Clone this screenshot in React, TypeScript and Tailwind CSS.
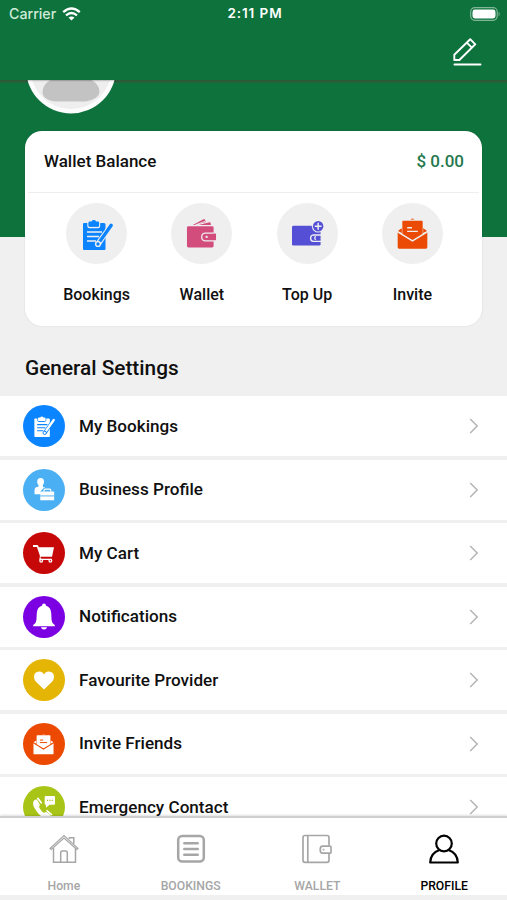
import type { ReactNode } from 'react';

type IconProps = { className?: string; bg?: string };

/* Glyphs use a 32x32 box; `bg` is the colour of the cut-out details. */
function ClipboardIcon({ className, bg }: IconProps) {
  return (
    <svg className={className} viewBox="0 0 32 32" fill="none">
      <path d="M3 5h20q1.500 0 1.500 1.500V31q0 1-1 1H3q-1 0-1-1V6q0-1 1-1z" fill="currentColor" />
      <path d="M7 4.500V8q0 1.500 1.500 1.500h8.500Q18.500 9.500 18.500 8V4.500" stroke={bg} strokeWidth="1.400" />
      <path d="M8.500 3.500h2a2.600 2.600 0 0 1 4.600 0h2q1 0 1 1v3q0 1-1 1H8.500q-1 0-1-1v-3q0-1 1-1z" fill="currentColor" />
      <path d="M6 14H21M6 18.500H18M6 23H15" stroke={bg} strokeWidth="1.500" />
      <path d="m28.300 5.500-13 18 4.400 3.700L32 8.500z" fill={bg} />
      <path d="m28.800 6.200-11.500 16.500 2.600 2L31.600 8.200q.8-1.400-.5-2.300t-2.300.3z" fill="currentColor" />
      <circle cx="17" cy="26" r="2.400" fill="currentColor" stroke={bg} strokeWidth="1.400" />
    </svg>
  );
}

function WalletIcon({ className, bg }: IconProps) {
  return (
    <svg className={className} viewBox="0 0 32 32" fill="none">
      <path d="M7 7.300 18 1.200q1-.4 1.600.5L20.500 4 9 7.300zM13 7.300l11-3q1-.2 1.300.7l.5 2.300z" fill="currentColor" />
      <path d="m10 7 10-3.600" stroke={bg} strokeWidth=".9" />
      <path d="M2.500 8.500H27q1.500 0 1.500 1.500v19q0 1.500-1.500 1.500H2.500Q1 30.500 1 29V10q0-1.500 1.500-1.500z" fill="currentColor" />
      <path d="M19.500 15.500H31v8H19.500q-3.300-.5-3.300-4t3.300-4z" fill="currentColor" stroke={bg} strokeWidth="1.300" />
      <path d="M28 16.200h3v6.600h-3z" fill="currentColor" />
      <circle cx="21.300" cy="19.500" r="1.200" fill={bg} />
    </svg>
  );
}

function TopUpIcon({ className, bg }: IconProps) {
  return (
    <svg className={className} viewBox="0 0 34 32" fill="none">
      <path d="M2.500 8H29q1.500 0 1.500 1.500V27q0 1.500-1.500 1.500H2.500Q1 28.500 1 27V9.500Q1 8 2.500 8z" fill="currentColor" />
      <path d="M31 17.500H23q-2.800.4-2.800 3.300t2.800 3.300h8" stroke={bg} strokeWidth="1.400" />
      <path d="M25.500 18.900q-2 1.800 0 3.700" stroke={bg} strokeWidth="1.300" />
      <circle cx="28" cy="8.500" r="6.500" fill={bg} />
      <circle cx="28" cy="8.500" r="5.400" fill="currentColor" />
      <path d="M28 5v7M24.500 8.500h7" stroke={bg} strokeWidth="1.500" />
    </svg>
  );
}

function InviteIcon({ className, bg }: IconProps) {
  return (
    <svg className={className} viewBox="0 0 32 32" fill="none">
      <path d="M14 1.500q2-1.800 4 0z" fill="currentColor" />
      <path d="M6.500 2.800h19q1 0 1 1V20L16 26 5.500 20V3.800q0-1 1-1z" fill="currentColor" />
      <path d="M10.500 10h5M10.500 13.800h11" stroke={bg} strokeWidth="1.500" />
      <path d="M1.500 13 5 10.500v5L1.200 13.700zM30.500 13 27 10.500v5l3.800-1.800z" fill="currentColor" />
      <path d="M.7 14.500 16 23.800l15.300-9.300v15.800q0 1.500-1.500 1.500H2.200q-1.500 0-1.500-1.500z" fill="currentColor" />
      <path d="M.8 14.300 16 23.700l15.200-9.400" stroke={bg} strokeWidth="1.600" />
    </svg>
  );
}

function BusinessIcon({ className, bg }: IconProps) {
  return (
    <svg className={className} viewBox="0 0 32 34" fill="none">
      <ellipse cx="11" cy="5.500" rx="5" ry="5.500" fill="currentColor" />
      <path d="M8 9h6l.7 4.500h3L11 20v4H2V18q0-4.300 4-4.800l2-.5z" fill="currentColor" />
      <path d="M10.500 20.500 15 15h14v5H10.500z" fill={bg} />
      <path d="M16 20v-2q0-1.500 1.500-1.500h7Q26 16.500 26 18v2" stroke="currentColor" strokeWidth="1.700" />
      <path d="M11.500 20H30q1 0 1 1v12H10.500V21q0-1 1-1z" fill="currentColor" />
      <path d="M10.500 26.500H31" stroke={bg} strokeWidth="1.400" />
    </svg>
  );
}

function CartIcon({ className, bg }: IconProps) {
  return (
    <svg className={className} viewBox="0 0 32 32" fill="none">
      <path d="M0 3h6.500q1.200 0 1.600 1.500L8.800 6.500H32l-3 14.500H11L6 6H0z" fill="currentColor" />
      <path d="M11.500 20 10.800 25h17.700" stroke="currentColor" strokeWidth="2" />
      <path d="M11 22h17.500" stroke={bg} strokeWidth="1" />
      <circle cx="12.500" cy="27" r="3" fill="currentColor" />
      <circle cx="26.500" cy="27" r="3" fill="currentColor" />
      <circle cx="12.500" cy="27" r="1" fill={bg} />
      <circle cx="26.500" cy="27" r="1" fill={bg} />
    </svg>
  );
}

function BellIcon({ className }: IconProps) {
  return (
    <svg className={className} viewBox="0 0 32 38" fill="currentColor">
      <path d="M16 0q2.600 0 3 3.300 7 2 7.500 10.700l.5 10q.4 5 4.700 7.500V33H.3v-1.500Q4.600 29 5 24l.5-10Q6 5.300 13 3.300 13.400 0 16 0zM11.500 34.500h9Q19.500 38 16 38t-4.500-3.500z" />
    </svg>
  );
}

function HeartIcon({ className }: IconProps) {
  return (
    <svg className={className} viewBox="0 0 30 28" fill="currentColor">
      <path d="M15 27.500 3.300 16.200Q0 12.800 0 8.700 0 .8 8 .6q4.800 0 7 4.400Q17.200.6 22 .6q8 .2 8 8.100 0 4.100-3.300 7.500z" />
    </svg>
  );
}

function EmergencyIcon({ className, bg }: IconProps) {
  return (
    <svg className={className} viewBox="0 0 32 32" fill="none">
      <path d="M1.500 6.500q3.500-3 5.500.8l2.500 4.500q.8 2-.5 3.300-1 1.500 4.500 7.700 2 2 3.500 1.200 2-1.300 3.500 0l4 3q2 1.500-.5 4-6 4.500-15-4Q-3.500 12.500 1.500 6.500z" fill="currentColor" />
      <path d="m7 3.500 5 6.300M20.500 21.500l6.500 5.500" stroke="currentColor" strokeWidth="2.500" strokeLinecap="round" />
      <path d="M18.500 0h12q1.500 0 1.500 1.500v9.700q0 1.500-1.500 1.500H24L18.800 17v-4.300h-.3q-1.500 0-1.500-1.500V1.500Q17 0 18.500 0z" fill="currentColor" />
      <path d="M20.300 6.500h1.700m1.700 0h1.700m1.700 0h1.700" stroke={bg} strokeWidth="1.900" />
    </svg>
  );
}

function Chevron() {
  return (
    <svg className="h-4 w-2.5" viewBox="0 0 10 16" fill="none">
      <path d="m1.200 1 7 7-7 7" stroke="#b4b4b4" strokeWidth="1.500" />
    </svg>
  );
}

const actions: { label: string; icon: ReactNode }[] = [
  { label: 'Bookings', icon: <ClipboardIcon className="h-8 w-8 text-[#0d84ff]" bg="#efefef" /> },
  { label: 'Wallet', icon: <WalletIcon className="h-[31px] w-[31px] text-[#d24d7c]" bg="#efefef" /> },
  { label: 'Top Up', icon: <TopUpIcon className="h-[31px] w-[33px] text-[#544fd5]" bg="#efefef" /> },
  { label: 'Invite', icon: <InviteIcon className="h-[31px] w-[31px] text-[#ea4a04]" bg="#efefef" /> },
];

const settings: { label: string; tone: string; icon: ReactNode }[] = [
  { label: 'My Bookings', tone: 'bg-[#0b84ff]', icon: <ClipboardIcon className="ml-px h-[22px] w-[22px]" bg="#0b84ff" /> },
  { label: 'Business Profile', tone: 'bg-[#4bb0f3]', icon: <BusinessIcon className="h-[23px] w-[22px]" bg="#4bb0f3" /> },
  { label: 'My Cart', tone: 'bg-[#c60808]', icon: <CartIcon className="h-[21px] w-[21px]" bg="#c60808" /> },
  { label: 'Notifications', tone: 'bg-[#7b00e2]', icon: <BellIcon className="h-[27px] w-[22px]" /> },
  { label: 'Favourite Provider', tone: 'bg-[#e5b505]', icon: <HeartIcon className="h-[19px] w-5" /> },
  { label: 'Invite Friends', tone: 'bg-[#ec4a02]', icon: <InviteIcon className="h-[22px] w-[21px]" bg="#ec4a02" /> },
  { label: 'Emergency Contact', tone: 'bg-[#a8c517]', icon: <EmergencyIcon className="h-[22px] w-[22px]" bg="#a8c517" /> },
];

function HomeIcon() {
  return (
    <svg className="h-[30px] w-[30px]" viewBox="0 0 30 30" fill="none" stroke="currentColor" strokeWidth="1.500">
      <path d="M1 14.500 15 1.500l14 13-1.200 1L15 4 2.200 15.500z" strokeWidth="1.100" />
      <path d="M4.500 14v14.300h7.200V18.500q0-1.500 1.500-1.500h3.600q1.500 0 1.500 1.500v9.800h8.200V14M11.700 28.300h6.600M20.500 5V3.700h4.300v6" />
    </svg>
  );
}

function ListIcon() {
  return (
    <svg className="h-[30px] w-[30px]" viewBox="0 0 30 30" fill="none" stroke="currentColor" strokeLinecap="round">
      <rect x="2.200" y="2" width="25.600" height="25.600" rx="4" strokeWidth="2.500" />
      <path d="M8.300 9.300h13.400M8.300 15h13.400M8.300 20.800h13.400" strokeWidth="2.500" />
    </svg>
  );
}

function WalletOutlineIcon() {
  return (
    <svg className="h-[30px] w-[30px]" viewBox="0 0 30 30" fill="none" stroke="currentColor" strokeWidth="1.700">
      <path d="M27 11.500V3.500q0-2-2-2H3q-2 0-2 2v22.800q0 2 2 2h22q2 0 2-2v-7M5.800 1.500v26.800" />
      <path d="M28 12.200h-7.500q-2.300 0-2.300 3.500t2.300 3.500H28q1 0 1-1v-5q0-1-1-1z" />
      <circle cx="21.500" cy="15.700" r=".7" strokeWidth=".8" />
    </svg>
  );
}

function PersonIcon() {
  return (
    <svg className="h-[30px] w-[30px]" viewBox="0 0 30 30" fill="none" stroke="currentColor" strokeWidth="2.200">
      <circle cx="15" cy="9.500" r="7.800" />
      <path d="M10.500 16Q1.500 19 1.200 28.500h27.600Q28.500 19 19.500 16" strokeLinejoin="round" />
    </svg>
  );
}

const tabs: { label: string; icon: ReactNode; active?: boolean }[] = [
  { label: 'Home', icon: <HomeIcon /> },
  { label: 'BOOKINGS', icon: <ListIcon /> },
  { label: 'WALLET', icon: <WalletOutlineIcon /> },
  { label: 'PROFILE', icon: <PersonIcon />, active: true },
];

function StatusBar() {
  return (
    <div className="grid h-7 grid-cols-3 items-center pr-1.5 pl-[9px] font-[Inter,sans-serif] text-white">
      <div className="flex items-center gap-1.5">
        <span className="text-[14.2px] leading-none text-[#cdebd8]">Carrier</span>
        <svg className="h-[14px] w-[19px]" viewBox="0 0 19 14" fill="none" stroke="currentColor">
          <path d="M1.200 5.100q8.300-7.300 16.600 0" strokeWidth="2.300" />
          <path d="M4 8.300q5.500-4.600 11 0" strokeWidth="2.200" />
          <path d="M9.500 13.500 6.500 10.600q3-2.200 6 0z" fill="currentColor" stroke="none" />
        </svg>
      </div>
      <span className="text-center text-[13.5px] leading-none font-semibold tracking-[0.9px] whitespace-nowrap">2:11 PM</span>
      <svg className="h-[14px] w-[31px] justify-self-end" viewBox="0 0 31 14" fill="none">
        <rect x=".7" y=".7" width="26.500" height="12.600" rx="4" stroke="#81b696" strokeWidth="1.200" />
        <rect x="2.500" y="2.500" width="23" height="9" rx="2.400" fill="white" />
        <path d="M28.600 4.500q2.200 2.500 0 5z" fill="#81b696" />
      </svg>
    </div>
  );
}

export default function App() {
  return (
    <div className="flex h-[900px] w-full flex-col overflow-hidden bg-[#f0f0f0] font-[Roboto,sans-serif] font-medium text-[#101010]">
      <header className="h-20 shrink-0 bg-[#0e723d]">
        <StatusBar />
        <div className="flex justify-end pt-2.5 pr-[25.5px]">
          <svg className="h-[29px] w-[30px]" viewBox="0 0 30 29" fill="none" stroke="white" strokeWidth="1.900" strokeLinecap="round" strokeLinejoin="round">
            <path d="M2.300 22v-5.300L18.200 1.200 23.300 6.300 7.400 22zM14.800 4.700l5 5" />
            <path d="M2.500 26.600h26" strokeWidth="2" />
          </svg>
        </div>
      </header>

      <main className="min-h-0 flex-1 overflow-hidden">
        <section className="h-[157px] bg-linear-to-b from-[#2b5b39] from-[1.2%] to-[#0e723d] to-[2%] pl-[25.5px]">
          <svg className="h-[34px] w-[90px]" viewBox="0 11.500 90 34">
            <circle cx="45" cy="0" r="45" fill="#fcfcfc" />
            <circle cx="45" cy="0" r="40.500" fill="#eeeeee" />
            <path d="M26 10.500h38Q73.500 16 73.500 23T60 33H31Q16.500 32 16.500 23 16.500 16 26 10.500z" fill="#c4c3c4" />
            <path d="M0 11.500h90v1.300H0z" fill="#000000" opacity=".18" />
          </svg>
        </section>

        <section className="mx-[25px] -mt-[106px] h-[195px] rounded-[17px] bg-white shadow-[0_0_2px_rgba(0,0,0,0.12)]">
          <div className="mx-[3px] flex h-[62px] items-center justify-between border-b border-[#eeeeee] pt-px pr-[15px] pl-4 text-[17px]">
            <h2>Wallet Balance</h2>
            <span className="text-[#25794d]">$ 0.00</span>
          </div>
          <div className="grid grid-cols-4 pt-2.5 pr-[17px] pl-[19px]">
            {actions.map((action) => (
              <div key={action.label} className="flex flex-col items-center">
                <div className="flex h-[61px] w-[61px] items-center justify-center rounded-full bg-[#efefef]">{action.icon}</div>
                <span className="mt-5 text-[16px] leading-[22px]">{action.label}</span>
              </div>
            ))}
          </div>
        </section>

        <h2 className="flex h-[70px] items-center pt-4 pl-[25px] text-[20.8px]">General Settings</h2>

        <ul className="flex flex-col gap-[3.5px]">
          {settings.map((item) => (
            <li key={item.label} className="flex h-[60px] shrink-0 items-center bg-white pr-7 pl-[22.5px]">
              <div className={`flex h-[42px] w-[42px] shrink-0 items-center justify-center rounded-full text-white ${item.tone}`}>{item.icon}</div>
              <span className="ml-[14.5px] flex-1 pt-px text-[17.1px]">{item.label}</span>
              <Chevron />
            </li>
          ))}
        </ul>
      </main>

      <nav className="grid h-[79px] shrink-0 grid-cols-4 border-t-2 border-[#cfcfcf] bg-white shadow-[0_-1px_2px_rgba(0,0,0,0.12)]">
        {tabs.map((tab) => (
          <div key={tab.label} className={`flex flex-col items-center pt-4 pl-px ${tab.active ? 'text-black' : 'text-[#a6a6a6]'}`}>
            {tab.icon}
            <span className="mt-3.5 text-[12.2px] leading-4">{tab.label}</span>
          </div>
        ))}
      </nav>
      <div className="h-[5px] shrink-0 bg-[#f0f0f0]" />
    </div>
  );
}
